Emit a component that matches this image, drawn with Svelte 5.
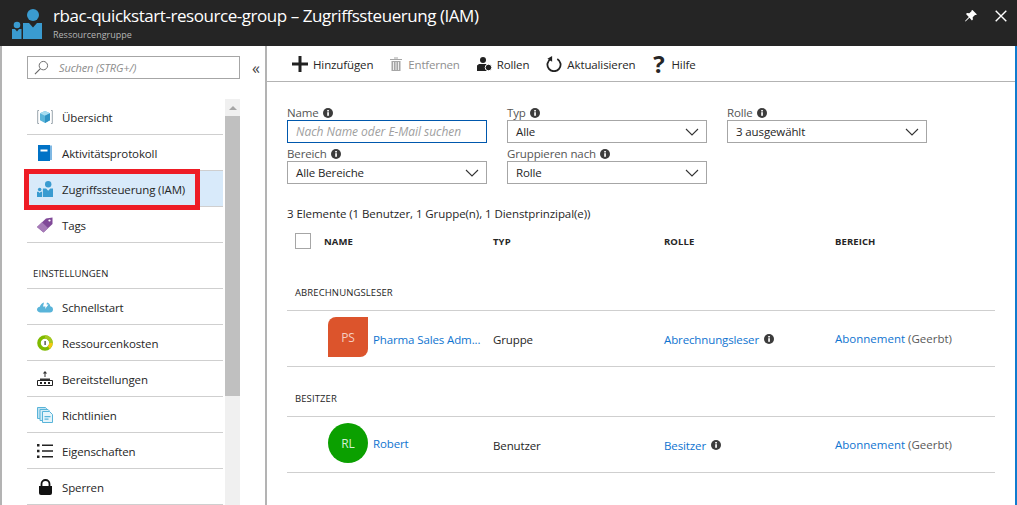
<script>
	const menuTop = [
		{ label: 'Übersicht', icon: 'cube' },
		{ label: 'Aktivitätsprotokoll', icon: 'log' },
		{ label: 'Zugriffssteuerung (IAM)', icon: 'iam', active: true },
		{ label: 'Tags', icon: 'tag' }
	];
	const menuSettings = [
		{ label: 'Schnellstart', icon: 'cloud' },
		{ label: 'Ressourcenkosten', icon: 'cost' },
		{ label: 'Bereitstellungen', icon: 'deploy' },
		{ label: 'Richtlinien', icon: 'policy' },
		{ label: 'Eigenschaften', icon: 'props' },
		{ label: 'Sperren', icon: 'lock' }
	];
	const groups = [
		{ title: 'ABRECHNUNGSLESER', initials: 'PS', name: 'Pharma Sales Adm...', type: 'Gruppe', role: 'Abrechnungsleser', square: true },
		{ title: 'BESITZER', initials: 'RL', name: 'Robert', type: 'Benutzer', role: 'Besitzer', square: false }
	];
</script>

{#snippet info()}
	<svg class="info" viewBox="0 0 10 10" width="10" height="10">
		<circle cx="5" cy="5" r="5" fill="#3c3c3c" />
		<rect x="4.2" y="4.2" width="1.7" height="3.6" fill="#fff" />
		<rect x="4.2" y="2" width="1.7" height="1.5" fill="#fff" />
	</svg>
{/snippet}

{#snippet chevron()}
	<svg class="chevron" viewBox="0 0 14 8" width="14" height="8">
		<path d="M1 1l6 6 6-6" fill="none" stroke="#333" stroke-width="1.1" />
	</svg>
{/snippet}

{#snippet peopleIcon(w, h)}
	<svg viewBox="0 0 30 30" width={w} height={h}>
		<circle cx="21" cy="6" r="6" fill="#3a9bd0" />
		<path d="M11 30V14h6l4 4.500 4-4.500h5v16z" fill="#3a9bd0" />
		<circle cx="5" cy="16" r="3.300" fill="#3a9bd0" />
		<path d="M0 30V20h3l2 2.500 2-2.500h2.500v10z" fill="#3a9bd0" />
	</svg>
{/snippet}

{#snippet menuIcon(name)}
	{#if name === 'cube'}
		<svg viewBox="0 0 16 16" width="16" height="16">
			<path d="M2 1.500H.7v13H2M14 1.500h1.300v13H14" fill="none" stroke="#9aa5ad" />
			<path d="M8 2l5 2.300v7L8 14l-5-2.700v-7z" fill="#59b4d9" />
			<path d="M8 2l5 2.300L8 6.800 3 4.300z" fill="#a5dcf0" />
			<path d="M8 6.800V14l5-2.700v-7z" fill="#2e93c4" />
		</svg>
	{:else if name === 'log'}
		<svg viewBox="0 0 16 16" width="16" height="16">
			<path d="M1 0h12v16H1z" fill="#0072c6" />
			<path d="M13 .5h2v14.500h-2z" fill="#7fb8e3" />
			<path d="M3.500 4.500h7v2h-7z" fill="#fff" />
		</svg>
	{:else if name === 'iam'}
		{@render peopleIcon(16, 16)}
	{:else if name === 'tag'}
		<svg viewBox="0 0 16 16" width="16" height="16">
			<path d="M0 10L9 1.500 15.500 0.500 15.500 7 6.500 15.500z" fill="#804998" />
			<path d="M0 10L5 5.300 11 11 6.500 15.500z" fill="#a67bb8" />
			<circle cx="12.500" cy="3.500" r="1.100" fill="#fff" />
		</svg>
	{:else if name === 'cloud'}
		<svg viewBox="0 0 16 12" width="16" height="12">
			<path d="M3.500 11.500C1.500 11.500 0 10.200 0 8.600c0-1.500 1.200-2.700 2.800-2.800C3.400 3.500 5.200 2 7 1.500L6 5.500h2.500L8 8l3.500-4.500H9.500L10 1.500c1.800.3 3 1.800 3.300 3.700C15 5.500 16 6.800 16 8.500c0 1.700-1.300 3-3 3z" fill="#59b4d9" />
		</svg>
	{:else if name === 'cost'}
		<svg viewBox="0 0 16 16" width="16" height="16">
			<circle cx="8" cy="8" r="6" fill="#fff" stroke="#7fba00" stroke-width="3.600" />
			<path d="M8 .2a7.800 7.800 0 0 1 7.800 7.800H12.200A4.200 4.200 0 0 0 8 3.800z" fill="#a5c820" />
			<path d="M15.800 8a7.800 7.800 0 0 1-3 6l-2-2.700A4.200 4.200 0 0 0 12.200 8z" fill="#f2c811" />
			<path d="M7.500 6h1.200v4H7.500z" fill="#333" />
		</svg>
	{:else if name === 'deploy'}
		<svg viewBox="0 0 16 15" width="16" height="15">
			<path d="M8 0l2.200 2.500H8.500V6h-1V2.500H5.800z" fill="#333" />
			<path d="M3 7.500h10V9H3z" fill="#333" />
			<path d="M.5 9.500h15v5H.500z" fill="#fff" stroke="#222" />
			<path d="M3 11h2v2H3zM7 11h2v2H7zM11 11h2v2h-2z" fill="#222" />
		</svg>
	{:else if name === 'policy'}
		<svg viewBox="0 0 16 16" width="16" height="16">
			<path d="M.5.500h8l1 1v10h-9z" fill="#bfe3f3" stroke="#59b4d9" />
			<path d="M3 2.500h8l1 1v10H3z" fill="#d5eef8" stroke="#59b4d9" />
			<path d="M5.500 4.500h7l3 3v8h-10z" fill="#e6f5fb" stroke="#59b4d9" />
			<path d="M7.500 9h6v1.200h-6zM7.500 11.500h4v1.200h-4z" fill="#59b4d9" />
		</svg>
	{:else if name === 'props'}
		<svg viewBox="0 0 16 14" width="16" height="14">
			<path d="M0 0h2.500v2.500H0zM0 5.800h2.500v2.500H0zM0 11.500h2.500V14H0z" fill="#222" />
			<path d="M5 .5h11v1.500H5zM5 6.300h11v1.500H5zM5 12h11v1.500H5z" fill="#222" />
		</svg>
	{:else if name === 'lock'}
		<svg viewBox="0 0 15 16" width="15" height="16">
			<path d="M3.500 7V5a4 4 0 0 1 8 0v2" fill="none" stroke="#111" stroke-width="1.800" />
			<path d="M1 7h13v7a2 2 0 0 1-2 2H3a2 2 0 0 1-2-2z" fill="#111" />
		</svg>
	{/if}
{/snippet}

{#snippet menuRow(item)}
	<li class="menu-row" class:active={item.active}>
		<span class="menu-icon">{@render menuIcon(item.icon)}</span>
		<span class="menu-label">{item.label}</span>
	</li>
{/snippet}

<div class="blade">
	<header class="titlebar">
		<span class="logo">{@render peopleIcon(30, 30)}</span>
		<div class="titles">
			<h1>rbac-quickstart-resource-group – Zugriffssteuerung (IAM)</h1>
			<p>Ressourcengruppe</p>
		</div>
		<div class="window-actions">
			<svg viewBox="0 0 14 14" width="14" height="14">
				<path d="M8.500 1l4.500 4.500-1.300.6-.7-.2-2.300 2.400.2 2.300-1 1L5.500 8.700 1.500 12.500 1 12l3.800-4L2 5l1-1 2.300.2 2.400-2.300-.2-.7z" fill="#fff" />
			</svg>
			<svg viewBox="0 0 12 12" width="12" height="12">
				<path d="M.7.700l10.600 10.600M11.300.700L.7 11.300" stroke="#fff" stroke-width="1.400" />
			</svg>
		</div>
	</header>

	<div class="content">
		<aside class="sidebar">
			<div class="search-row">
				<div class="search">
					<svg viewBox="0 0 16 16" width="15" height="15">
						<circle cx="10" cy="6" r="4.500" fill="none" stroke="#666" />
						<path d="M6.800 9.200L1 15" stroke="#666" stroke-width="1.200" />
					</svg>
					<span>Suchen (STRG+/)</span>
				</div>
				<span class="collapse">«</span>
			</div>
			<div class="menu-scroll">
				<nav class="menu">
					<ul>
						{#each menuTop as item}
							{@render menuRow(item)}
						{/each}
					</ul>
					<h2>EINSTELLUNGEN</h2>
					<ul>
						{#each menuSettings as item}
							{@render menuRow(item)}
						{/each}
					</ul>
				</nav>
				<div class="scrollbar">
					<span class="arrow"></span>
					<span class="thumb"></span>
				</div>
			</div>
		</aside>

		<main class="main">
			<div class="toolbar">
				<button>
					<svg viewBox="0 0 16 16" width="16" height="16"><path d="M6.500 0h3v6.500H16v3H9.500V16h-3V9.500H0v-3h6.500z" fill="#222" /></svg>
					Hinzufügen
				</button>
				<button class="disabled">
					<svg viewBox="0 0 12 14" width="12" height="14">
						<path d="M0 2h12v1H0zM4 .5h4v1H4zM1.500 4h9v10h-9z" fill="#a6a6a6" />
						<path d="M3.500 5v8M6 5v8M8.500 5v8" stroke="#fff" stroke-width=".8" />
					</svg>
					Entfernen
				</button>
				<button>
					<svg viewBox="0 0 15 14" width="15" height="14">
						<circle cx="6" cy="3" r="3" fill="#222" />
						<path d="M0 14V8.500L2 7h7l1 1.500V14z" fill="#222" />
						<circle cx="11.500" cy="10.500" r="3.300" fill="#222" stroke="#fff" />
					</svg>
					Rollen
				</button>
				<button>
					<svg viewBox="0 0 17 17" width="16" height="16">
						<path d="M5 3.100a7 7 0 1 0 7 0" fill="none" stroke="#222" stroke-width="1.900" />
						<path d="M6.500 0v6L1.500 3z" fill="#222" />
					</svg>
					Aktualisieren
				</button>
				<button>
					<span class="help">?</span>
					Hilfe
				</button>
			</div>

			<div class="page">
				<div class="filters">
					<label class="field">
						<span class="label">Name {@render info()}</span>
						<span class="input focused">Nach Name oder E-Mail suchen</span>
					</label>
					<label class="field">
						<span class="label">Typ {@render info()}</span>
						<span class="select">Alle {@render chevron()}</span>
					</label>
					<label class="field">
						<span class="label">Rolle {@render info()}</span>
						<span class="select">3 ausgewählt {@render chevron()}</span>
					</label>
					<label class="field">
						<span class="label">Bereich {@render info()}</span>
						<span class="select">Alle Bereiche {@render chevron()}</span>
					</label>
					<label class="field">
						<span class="label">Gruppieren nach {@render info()}</span>
						<span class="select">Rolle {@render chevron()}</span>
					</label>
				</div>

				<p class="summary">3 Elemente (1 Benutzer, 1 Gruppe(n), 1 Dienstprinzipal(e))</p>

				<div class="table-head">
					<span class="check"></span>
					<span class="col-name">NAME</span>
					<span class="col-type">TYP</span>
					<span class="col-role">ROLLE</span>
					<span>BEREICH</span>
				</div>

				{#each groups as g}
					<h3 class="group-title">{g.title}</h3>
					<div class="table-row">
						<span class="avatar" class:square={g.square}>{g.initials}</span>
						<a class="col-link" href="#top">{g.name}</a>
						<span class="col-type">{g.type}</span>
						<span class="col-role role-cell"><a href="#top">{g.role}</a> {@render info()}</span>
						<span class="scope"><a href="#top">Abonnement</a> (Geerbt)</span>
					</div>
				{/each}
			</div>
		</main>
	</div>
</div>

<style>
	:global(body) {
		margin: 0;
		background: #fff;
	}

	.blade {
		width: 1017px;
		height: 505px;
		overflow: hidden;
		display: flex;
		flex-direction: column;
		font-family: "Open Sans", "Noto Sans", sans-serif;
		font-size: 11.500px;
		letter-spacing: -0.12px;
		color: #262626;
		box-sizing: border-box;
	}

	.titlebar {
		height: 46px;
		flex-shrink: 0;
		background: #252525;
		color: #fff;
		display: flex;
		align-items: center;
		padding: 0 10px 1px 12px;
		box-sizing: border-box;
	}

	.logo {
		display: flex;
		margin-right: 11px;
		margin-top: 3px;
	}

	.titles {
		flex: 1;
	}

	h1 {
		margin: 0 0 1px;
		font-size: 17px;
		font-weight: 400;
		line-height: 22px;
		letter-spacing: -0.45px;
	}

	.titles p {
		margin: 0;
		font-size: 9px;
		line-height: 13px;
		letter-spacing: 0;
		color: #b5b5b5;
	}

	.window-actions {
		display: flex;
		align-items: center;
		gap: 17px;
		margin-bottom: 14px;
	}

	.content {
		flex: 1;
		display: flex;
		min-height: 0;
		border-right: 2px solid #0f7ccf;
		border-left: 2px solid #b3b3b3;
	}

	.sidebar {
		width: 265px;
		flex-shrink: 0;
		border-right: 2px solid #b3b3b3;
		padding: 10px 0 0 25px;
		box-sizing: border-box;
	}

	.search-row {
		display: flex;
		align-items: center;
		margin-bottom: 20px;
	}

	.search {
		width: 213px;
		height: 23px;
		box-sizing: border-box;
		border: 1px solid #a6a6a6;
		display: flex;
		align-items: center;
		gap: 10px;
		padding-left: 6px;
		font-style: italic;
		color: #8c8c8c;
		font-size: 11px;
	}

	.collapse {
		margin-left: 12px;
		font-size: 16px;
		line-height: 16px;
		color: #444;
	}

	.menu-scroll {
		display: flex;
		gap: 2px;
	}

	.menu {
		width: 196px;
	}

	ul {
		list-style: none;
		margin: 0;
		padding: 0;
	}

	.menu-row {
		height: 36px;
		box-sizing: border-box;
		border-bottom: 1px solid #cfcfcf;
		display: flex;
		align-items: center;
		padding-left: 10px;
		gap: 9px;
		position: relative;
	}

	.menu-label {
		margin-top: 2px;
	}

	.menu-row.active {
		background: #d8eafa;
	}

	.menu-row.active::after {
		content: "";
		position: absolute;
		left: -3px;
		top: -2px;
		width: 176px;
		height: 41px;
		box-sizing: border-box;
		border: 5px solid #ee1c25;
	}

	.menu-icon {
		width: 16px;
		height: 16px;
		display: flex;
		align-items: center;
		justify-content: center;
		flex-shrink: 0;
	}

	h2 {
		margin: 0;
		height: 46px;
		box-sizing: border-box;
		border-bottom: 1px solid #cfcfcf;
		padding: 24px 0 0 6px;
		font-size: 9.500px;
		line-height: 14px;
		font-weight: 400;
		letter-spacing: 0.1px;
	}

	.scrollbar {
		width: 15px;
		height: 406px;
		background: #f0f0f0;
		position: relative;
		display: flex;
		flex-direction: column;
		align-items: center;
		flex-shrink: 0;
	}

	.arrow {
		margin-top: 7px;
		width: 0;
		height: 0;
		border-left: 4px solid transparent;
		border-right: 4px solid transparent;
		border-bottom: 4px solid #a6a6a6;
	}

	.thumb {
		margin-top: 6px;
		width: 100%;
		height: 280px;
		background: #c0c0c0;
	}

	.main {
		flex: 1;
		min-width: 0;
	}

	.toolbar {
		height: 36px;
		box-sizing: border-box;
		border-bottom: 1px solid #b3b3b3;
		display: flex;
		align-items: center;
		padding-left: 25px;
		gap: 17px;
	}

	.toolbar button {
		display: flex;
		align-items: center;
		gap: 5px;
		border: 0;
		background: none;
		padding: 2px 0 0;
		font: inherit;
		letter-spacing: inherit;
		color: #262626;
	}

	.toolbar button svg {
		margin-top: -2px;
	}

	.toolbar button.disabled {
		color: #8f8f8f;
		gap: 6px;
		letter-spacing: -0.2px;
	}

	.help {
		font-size: 24px;
		line-height: 16px;
		font-weight: 700;
		width: 13px;
		margin: -2px 1px 0 0;
		text-align: center;
	}

	.page {
		padding: 23px 20px 0 20px;
	}

	.filters {
		display: grid;
		grid-template-columns: repeat(3, 200px);
		column-gap: 20px;
		row-gap: 3px;
		margin-bottom: 22px;
	}

	.field {
		display: flex;
		flex-direction: column;
	}

	.label {
		display: flex;
		align-items: center;
		gap: 4px;
		height: 15px;
		color: #555;
		line-height: 15px;
	}

	.input,
	.select {
		height: 23px;
		box-sizing: border-box;
		border: 1px solid #a6a6a6;
		display: flex;
		align-items: center;
		justify-content: space-between;
		padding: 0 7px 0 8px;
		color: #262626;
	}

	.input.focused {
		border-color: #0058ad;
		color: #a0a0a0;
		font-style: italic;
		font-size: 12px;
		letter-spacing: -0.04px;
	}

	.summary {
		margin: 0 0 11px;
		line-height: 16px;
		letter-spacing: -0.07px;
	}

	.table-head,
	.table-row {
		display: flex;
		align-items: center;
	}

	.table-head {
		height: 16px;
		font-size: 9.500px;
		font-weight: 700;
		padding-left: 8px;
		letter-spacing: 0.1px;
	}

	.check {
		width: 16px;
		height: 16px;
		box-sizing: border-box;
		border: 1px solid #a6a6a6;
		margin-right: 13px;
	}

	.col-name {
		width: 169px;
	}

	.col-type {
		width: 171px;
	}

	.col-role {
		width: 171px;
	}

	.group-title {
		margin: 0;
		height: 50px;
		box-sizing: border-box;
		border-bottom: 1px solid #cfcfcf;
		padding: 25px 0 0 8px;
		font-size: 9.500px;
		line-height: 14px;
		font-weight: 400;
		letter-spacing: 0.1px;
	}

	.table-head + .group-title {
		margin-top: 16px;
		height: 46px;
		padding-top: 21px;
	}

	.table-row {
		height: 56px;
		box-sizing: border-box;
		border-bottom: 1px solid #cfcfcf;
		padding: 1px 0 0 41px;
	}

	.avatar {
		width: 40px;
		height: 40px;
		background: #0ba000;
		color: #d5f0d3;
		border-radius: 50%;
		display: flex;
		align-items: center;
		justify-content: center;
		margin: 0 5px 4px 0;
		flex-shrink: 0;
		font-size: 12px;
	}

	.avatar.square {
		background: #dc542c;
		color: #f5cfc2;
		border-radius: 8px 0 8px 0;
	}

	.col-link {
		width: 120px;
		white-space: nowrap;
		margin-bottom: 3px;
	}

	.square + .col-link {
		margin: 1px 0 0;
	}

	a {
		color: #0f74d0;
		text-decoration: none;
	}

	.role-cell {
		display: flex;
		align-items: center;
		gap: 5px;
	}

	.scope {
		color: #595959;
		letter-spacing: 0;
		margin-bottom: 1px;
	}
</style>
